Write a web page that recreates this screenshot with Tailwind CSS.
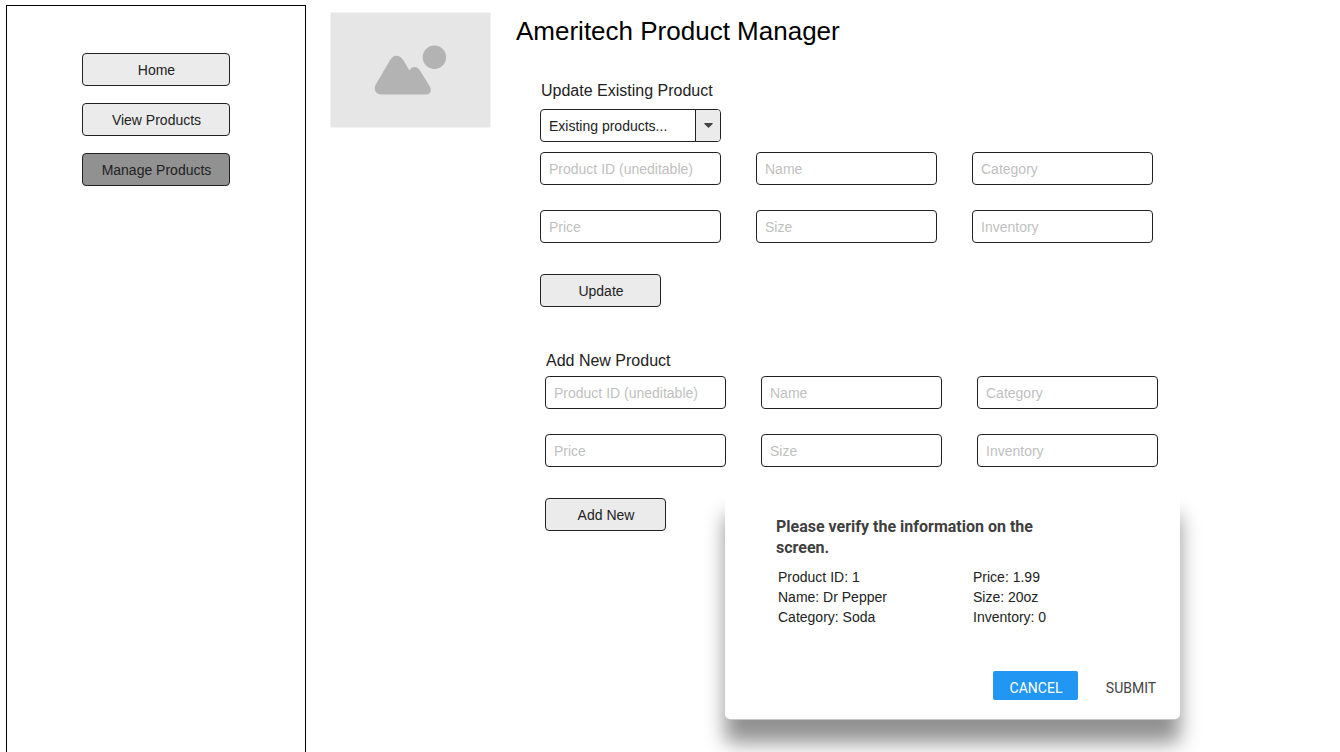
<!DOCTYPE html>
<html lang="en">
<head>
<meta charset="utf-8">
<title>Ameritech Product Manager</title>
<script src="https://cdn.jsdelivr.net/npm/@tailwindcss/browser@4"></script>
</head>
<body class="relative flex min-h-screen bg-white pt-[5px] pl-[6px] font-['Liberation_Sans',Arial,sans-serif] text-sm text-[#222]">
  <aside class="flex w-[300px] shrink-0 flex-col border border-b-0 border-black pt-[47px]">
    <nav class="flex flex-col items-center gap-[17px]" aria-label="Main">
      <button type="button" class="h-[33px] w-[148px] rounded border border-[#222] bg-[#ebebeb] pt-px pl-px">Home</button>
      <button type="button" class="h-[33px] w-[148px] rounded border border-[#222] bg-[#ebebeb] pt-px pl-px">View Products</button>
      <button type="button" aria-current="page" class="h-[33px] w-[148px] rounded border border-[#222] bg-[#919191] pt-px pl-px">Manage Products</button>
    </nav>
  </aside>

  <main class="flex flex-1 items-start gap-[25px] pt-[7px] pl-6">
    <svg class="h-[116px] w-[161px] shrink-0" viewBox="0 0 161 116" role="img" aria-label="Logo placeholder">
      <rect x=".5" y=".5" width="160" height="115" fill="#e6e6e6"/>
      <g fill="#b3b3b3">
        <circle cx="104.400" cy="45.200" r="11.700"/>
        <path d="M45.800 72.500L59.500 49Q62.500 43.700 66.500 43.700Q70.500 43.700 73.500 48.500L79.300 58.300Q81.500 54.900 84.700 54.900Q87.500 54.900 89.800 58.300L99.800 74.500C102.500 79 100 82.600 95.500 82.600H52C46 82.600 43 77.500 45.800 72.500Z"/>
      </g>
    </svg>

    <div class="flex-1 pt-1">
      <h1 class="text-[26px] leading-[30px] text-black">Ameritech Product Manager</h1>

      <form class="mt-[33px] ml-6">
        <h2><label for="existing" class="block pl-px text-base leading-6">Update Existing Product</label></h2>
        <div class="relative mt-[6px] w-[181px]">
          <select id="existing" class="block h-[33px] w-full appearance-none rounded border border-[#222] bg-white pt-px pr-7 pl-2">
            <option>Existing products...</option>
          </select>
          <span class="pointer-events-none absolute inset-y-px right-px flex w-[25px] items-center justify-center rounded-r-[3px] border-l border-[#222] bg-[#ebebeb]">
            <svg class="h-[5px] w-[9px]" viewBox="0 0 9 5" fill="#444" aria-hidden="true"><path d="M.7 0H8.300Q9 .2 8.600.9L5 4.600Q4.500 5 4 4.600L.4.900Q0 .2.700 0Z"/></svg>
          </span>
        </div>
        <div class="mt-[10px] grid grid-cols-[repeat(3,181px)] gap-x-[35px] gap-y-[25px]">
          <input aria-label="Product ID" readonly placeholder="Product ID (uneditable)" class="h-[33px] rounded border border-[#222] px-2 pt-px placeholder:text-[#bfbfbf]">
          <input aria-label="Name" placeholder="Name" class="h-[33px] rounded border border-[#222] px-2 pt-px placeholder:text-[#bfbfbf]">
          <input aria-label="Category" placeholder="Category" class="h-[33px] rounded border border-[#222] px-2 pt-px placeholder:text-[#bfbfbf]">
          <input aria-label="Price" placeholder="Price" class="h-[33px] rounded border border-[#222] px-2 pt-px placeholder:text-[#bfbfbf]">
          <input aria-label="Size" placeholder="Size" class="h-[33px] rounded border border-[#222] px-2 pt-px placeholder:text-[#bfbfbf]">
          <input aria-label="Inventory" placeholder="Inventory" class="h-[33px] rounded border border-[#222] px-2 pt-px placeholder:text-[#bfbfbf]">
        </div>
        <button type="button" class="mt-[31px] block h-[33px] w-[121px] rounded border border-[#222] bg-[#ebebeb] pt-px pl-px">Update</button>
      </form>

      <form class="mt-[42px] ml-[29px]">
        <h2 class="pl-px text-base leading-6">Add New Product</h2>
        <div class="mt-[3px] grid grid-cols-[repeat(3,181px)] gap-x-[35px] gap-y-[25px]">
          <input aria-label="New product ID" readonly placeholder="Product ID (uneditable)" class="h-[33px] rounded border border-[#222] px-2 pt-px placeholder:text-[#bfbfbf]">
          <input aria-label="New product name" placeholder="Name" class="h-[33px] rounded border border-[#222] px-2 pt-px placeholder:text-[#bfbfbf]">
          <input aria-label="New product category" placeholder="Category" class="h-[33px] rounded border border-[#222] px-2 pt-px placeholder:text-[#bfbfbf]">
          <input aria-label="New product price" placeholder="Price" class="h-[33px] rounded border border-[#222] px-2 pt-px placeholder:text-[#bfbfbf]">
          <input aria-label="New product size" placeholder="Size" class="h-[33px] rounded border border-[#222] px-2 pt-px placeholder:text-[#bfbfbf]">
          <input aria-label="New product inventory" placeholder="Inventory" class="h-[33px] rounded border border-[#222] px-2 pt-px placeholder:text-[#bfbfbf]">
        </div>
        <button type="button" class="mt-[31px] block h-[33px] w-[121px] rounded border border-[#222] bg-[#ebebeb] pt-px pl-px">Add New</button>
      </form>
    </div>
  </main>

  <!-- Confirmation dialog -->
  <div class="absolute inset-0 overflow-hidden pointer-events-none">
    <section role="dialog" aria-labelledby="verify" class="pointer-events-auto absolute top-[491px] left-[725px] w-[455px] rounded-[5px] bg-white pt-[25px] pb-[19px] shadow-[0_1px_0_#c4c8c4,0_24px_20px_rgba(0,0,0,0.43)]">
      <h2 id="verify" class="ml-[51px] w-[280px] font-[Roboto,sans-serif] text-base leading-[21px] font-bold text-[#3f3f3f]">Please verify the information on the screen.</h2>
      <div class="mt-[9px] ml-[53px] grid grid-cols-[195px_1fr] leading-5">
        <p>Product ID: 1</p><p>Price: 1.99</p>
        <p>Name: Dr Pepper</p><p>Size: 20oz</p>
        <p>Category: Soda</p><p>Inventory: 0</p>
      </div>
      <div class="mt-11 flex justify-end gap-3 pr-2 font-[Roboto,sans-serif]">
        <button type="button" class="h-[29px] w-[85px] rounded-xs bg-[#2196f3] pt-1 pl-px text-white">CANCEL</button>
        <button type="button" class="h-[29px] w-[82px] pt-1 text-[#444]">SUBMIT</button>
      </div>
    </section>
  </div>
</body>
</html>
